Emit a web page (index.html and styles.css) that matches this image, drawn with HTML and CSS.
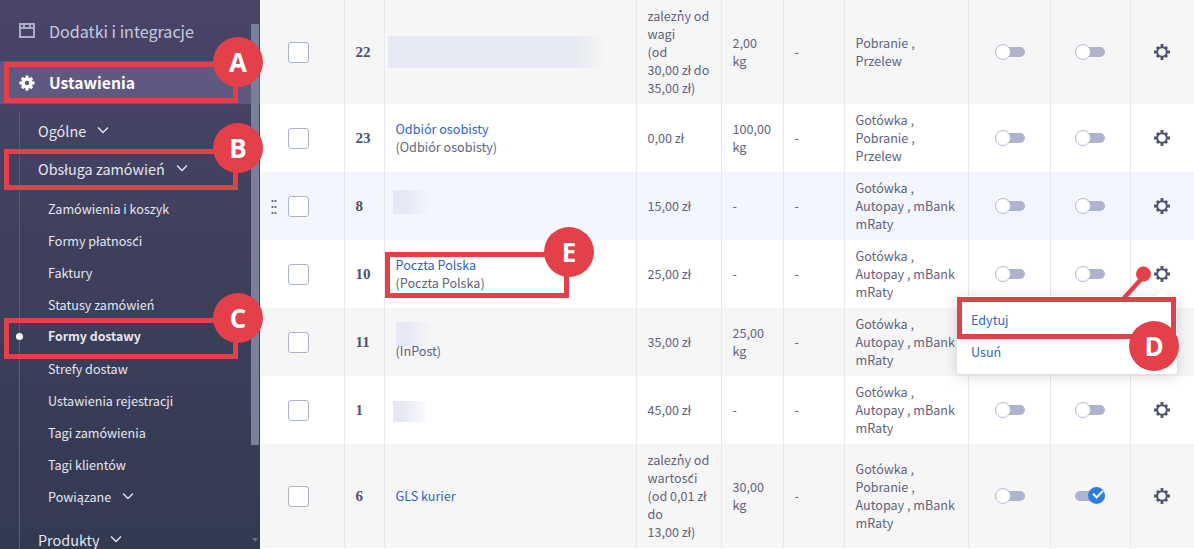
FILE: index.html
```html
<!DOCTYPE html>
<html lang="pl">
<head>
    <meta charset="UTF-8">
    <title>Formy dostawy</title>
    <link rel="stylesheet" href="styles.css">
</head>
<body>
    <svg width="0" height="0" class="defs">
        <symbol id="chev" viewBox="0 0 12 8"><path d="M1 1.5l5 5 5-5" fill="none" stroke="currentColor" stroke-width="1.4"/></symbol>
        <symbol id="gear" viewBox="0 0 18 18">
            <circle cx="9" cy="9" r="4.800" fill="none" stroke="currentColor" stroke-width="2"/>
            <path d="M7.600 1h2.800v3H7.600zM7.600 14h2.800v3H7.600zM1 7.600h3v2.800H1zM14 7.600h3v2.800h-3zM2.900 4.900l2-2 2.200 2.200-2 2zM10.900 5.100l2.200-2.200 2 2-2.200 2.200zM2.900 13.100l2.200-2.200 2 2-2.200 2.200zM10.900 12.900l2-2 2.200 2.200-2 2z" fill="currentColor"/>
        </symbol>
        <symbol id="gear-solid" viewBox="0 0 18 18">
            <circle cx="9" cy="9" r="4.500" fill="none" stroke="currentColor" stroke-width="4"/>
            <path d="M7.300 0.500h3.400v3H7.300zM7.300 14.500h3.400v3H7.300zM0.500 7.300h3v3.400h-3zM14.500 7.300h3v3.400h-3zM2 4.400L4.400 2l2.200 2.200-2.400 2.400zM11.400 4.200L13.600 2 16 4.400l-2.200 2.200zM2 13.600l2.200-2.200 2.400 2.400L4.400 16zM11.400 13.800l2.400-2.400 2.200 2.200-2.400 2.400z" fill="currentColor"/>
        </symbol>
    </svg>

    <aside class="sidebar">
        <div class="nav-top">
            <svg class="nav-icon" width="16" height="15" viewBox="0 0 16 15"><path d="M1 1h14v13H1zM1 5h14M5 1v4M11 1v4" fill="none" stroke="#a9aec6" stroke-width="2"/></svg>
            Dodatki i integracje
        </div>
        <div class="nav-current">
            <svg class="nav-gear" width="16" height="16"><use href="#gear-solid"/></svg>
            Ustawienia
        </div>
        <div class="nav-tree">
            <div class="nav-group">Ogólne <svg class="chev"><use href="#chev"/></svg></div>
            <div class="nav-group">Obsługa zamówień <svg class="chev"><use href="#chev"/></svg></div>
            <ul class="nav-sub">
                <li>Zamówienia i koszyk</li>
                <li>Formy płatności</li>
                <li>Faktury</li>
                <li>Statusy zamówień</li>
                <li class="active">Formy dostawy</li>
                <li>Strefy dostaw</li>
                <li>Ustawienia rejestracji</li>
                <li>Tagi zamówienia</li>
                <li>Tagi klientów</li>
                <li>Powiązane <svg class="chev"><use href="#chev"/></svg></li>
            </ul>
            <div class="nav-group last">Produkty <svg class="chev"><use href="#chev"/></svg></div>
        </div>
        <div class="scroll-thumb"></div>
        <div class="scroll-arrow"></div>
    </aside>

    <main class="content">
        <table class="ship-table">
            <colgroup>
                <col class="c-check"><col class="c-id"><col class="c-name"><col class="c-price"><col class="c-weight"><col class="c-time"><col class="c-pay"><col class="c-on"><col class="c-on2"><col class="c-act">
            </colgroup>
            <tr class="odd">
                <td class="check"><span class="box"></span></td>
                <td class="num">22</td>
                <td><div class="blur blur-wide"></div></td>
                <td>zależny od<br>wagi<br>(od<br>30,00 zł do<br>35,00 zł)</td>
                <td>2,00 kg</td>
                <td>-</td>
                <td>Pobranie , Przelew</td>
                <td class="mid"><span class="toggle"></span></td>
                <td class="mid"><span class="toggle"></span></td>
                <td class="mid"><svg class="gear"><use href="#gear"/></svg></td>
            </tr>
            <tr>
                <td class="check"><span class="box"></span></td>
                <td class="num">23</td>
                <td><a href="#">Odbiór osobisty</a><br>(Odbiór osobisty)</td>
                <td>0,00 zł</td>
                <td>100,00 kg</td>
                <td>-</td>
                <td>Gotówka , Pobranie , Przelew</td>
                <td class="mid"><span class="toggle"></span></td>
                <td class="mid"><span class="toggle"></span></td>
                <td class="mid"><svg class="gear"><use href="#gear"/></svg></td>
            </tr>
            <tr class="hover">
                <td class="check"><span class="box"></span><span class="drag"></span></td>
                <td class="num">8</td>
                <td><div class="blur blur-up"></div></td>
                <td>15,00 zł</td>
                <td>-</td>
                <td>-</td>
                <td>Gotówka , Autopay , mBank mRaty</td>
                <td class="mid"><span class="toggle"></span></td>
                <td class="mid"><span class="toggle"></span></td>
                <td class="mid"><svg class="gear"><use href="#gear"/></svg></td>
            </tr>
            <tr>
                <td class="check"><span class="box"></span></td>
                <td class="num">10</td>
                <td><a href="#">Poczta Polska</a><br>(Poczta Polska)</td>
                <td>25,00 zł</td>
                <td>-</td>
                <td>-</td>
                <td>Gotówka , Autopay , mBank mRaty</td>
                <td class="mid"><span class="toggle"></span></td>
                <td class="mid"><span class="toggle"></span></td>
                <td class="mid"><svg class="gear"><use href="#gear"/></svg></td>
            </tr>
            <tr class="odd">
                <td class="check"><span class="box"></span></td>
                <td class="num">11</td>
                <td><div class="blur blur-inline"></div>(InPost)</td>
                <td>35,00 zł</td>
                <td>25,00 kg</td>
                <td>-</td>
                <td>Gotówka , Autopay , mBank mRaty</td>
                <td class="mid"><span class="toggle"></span></td>
                <td class="mid"><span class="toggle"></span></td>
                <td class="mid"><svg class="gear"><use href="#gear"/></svg></td>
            </tr>
            <tr>
                <td class="check"><span class="box"></span></td>
                <td class="num">1</td>
                <td><div class="blur blur-low"></div></td>
                <td>45,00 zł</td>
                <td>-</td>
                <td>-</td>
                <td>Gotówka , Autopay , mBank mRaty</td>
                <td class="mid"><span class="toggle"></span></td>
                <td class="mid"><span class="toggle"></span></td>
                <td class="mid"><svg class="gear"><use href="#gear"/></svg></td>
            </tr>
            <tr class="odd">
                <td class="check"><span class="box"></span></td>
                <td class="num">6</td>
                <td><a href="#">GLS kurier</a></td>
                <td>zależny od<br>wartości<br>(od 0,01 zł<br>do<br>13,00 zł)</td>
                <td>30,00 kg</td>
                <td>-</td>
                <td>Gotówka , Pobranie , Autopay , mBank mRaty</td>
                <td class="mid"><span class="toggle"></span></td>
                <td class="mid"><span class="toggle on"></span></td>
                <td class="mid"><svg class="gear"><use href="#gear"/></svg></td>
            </tr>
        </table>
    </main>

    <!-- row menu -->
    <div class="menu">
        <a href="#">Edytuj</a>
        <a href="#">Usuń</a>
    </div>

    <!-- help annotations drawn over the screenshot -->
    <div class="mark mark-a"></div><div class="badge badge-a">A</div>
    <div class="mark mark-b"></div><div class="badge badge-b">B</div>
    <div class="mark mark-c"></div><div class="badge badge-c">C</div>
    <div class="mark mark-d"></div><div class="badge badge-d">D</div>
    <div class="mark mark-e"></div><div class="badge badge-e">E</div>
    <svg class="pointer" width="40" height="40" viewBox="0 0 40 40">
        <path d="M4 32L24 10" stroke="#e4404a" stroke-width="4.5"/>
        <circle cx="23.500" cy="8" r="7.500" fill="#e4404a"/>
    </svg>
</body>
</html>
```

FILE: styles.css
```css
html, body {
    margin: 0;
    padding: 0;
    height: 549px;
    overflow: hidden;
}

body {
    display: flex;
    font-family: "Noto Sans CJK SC", "Noto Sans", sans-serif;
    font-size: 12.6px;
    color: #62627f;
    background: #fff;
}

.defs {
    position: absolute;
}

/* Sidebar */
.sidebar {
    position: relative;
    flex: 0 0 260px;
    height: 549px;
    overflow: hidden;
    background: linear-gradient(180deg, #4a4468, #323a50);
    color: #e4e6f0;
}

.nav-top {
    display: flex;
    align-items: center;
    height: 61px;
    padding-left: 19px;
    font-size: 16.100px;
    color: #c6cade;
}

.nav-icon {
    margin-right: 14px;
}

.nav-current {
    display: flex;
    align-items: center;
    height: 43px;
    padding-left: 19px;
    background: #5f5880;
    font-size: 15.700px;
    font-weight: 700;
    color: #fff;
}

.nav-gear {
    margin-right: 14px;
    color: #fff;
}

.nav-tree {
    margin: 8px 0 0 19px;
    border-left: 1px solid #5a5b78;
}

.nav-group {
    display: flex;
    align-items: center;
    height: 36px;
    margin-bottom: 2px;
    padding-left: 18px;
    font-size: 14.400px;
}

.nav-group.last {
    margin-top: 9px;
}

.chev {
    width: 12px;
    height: 8px;
    margin-left: 11px;
    color: #e4e6f0;
}

.nav-sub {
    list-style: none;
    margin: 6px 0 0;
    padding: 0;
}

.nav-sub li {
    position: relative;
    display: flex;
    align-items: center;
    height: 32px;
    padding-left: 28px;
    font-size: 12.600px;
}

.nav-sub li.active {
    font-weight: 700;
    font-size: 12.300px;
}

.nav-sub li.active::before {
    content: "";
    position: absolute;
    left: -4px;
    top: 13px;
    width: 7px;
    height: 7px;
    border-radius: 50%;
    background: #fff;
}

.scroll-thumb {
    position: absolute;
    left: 251px;
    top: 24px;
    width: 8px;
    height: 421px;
    background: #7a7f9c;
}

.scroll-arrow {
    position: absolute;
    left: 252px;
    top: 538px;
    border: 3px solid transparent;
    border-top: 4px solid #6c708c;
}

/* Table */
.content {
    flex: 1;
    min-width: 0;
}

.ship-table {
    width: 934px;
    table-layout: fixed;
    border-collapse: collapse;
    line-height: 18px;
}

.c-check { width: 84px; }
.c-id { width: 40px; }
.c-name { width: 252px; }
.c-price { width: 85px; }
.c-weight { width: 62px; }
.c-time { width: 61px; }
.c-pay { width: 124px; }
.c-on { width: 82px; }
.c-on2 { width: 80px; }
.c-act { width: 64px; }

.ship-table tr {
    height: 68px;
}

.ship-table tr.odd {
    background: #f6f6f6;
}

.ship-table tr.hover {
    background: #f3f6fd;
}

.ship-table td {
    padding: 7px 11px;
    border-left: 1px solid #e9e9ee;
    vertical-align: middle;
}

.ship-table td:first-child {
    border-left: none;
}

.ship-table a {
    color: #2d66c8;
    text-decoration: none;
}

td.check {
    padding: 0 35px 0 0;
}

td.check .box {
    display: block;
    float: right;
    width: 19px;
    height: 19px;
    background: #fff;
    border: 1px solid #aab3d0;
    border-radius: 3px;
}

.drag {
    float: right;
    width: 6px;
    height: 18px;
    margin: 2px 11px 0 0;
    background-image: radial-gradient(circle, #666a8a 1px, transparent 1.2px);
    background-size: 3px 6px;
}

td.num {
    font-family: "Liberation Serif", serif;
    font-size: 15px;
    font-weight: 700;
    color: #4f5272;
}

.ship-table td.mid {
    padding: 0;
    text-align: center;
}

.ship-table td.mid:nth-child(8) {
    padding-left: 1px;
}

.blur {
    width: 37px;
    height: 24px;
    margin-left: -3px;
    background: linear-gradient(90deg, #e6e9f4 30%, rgba(230, 233, 244, 0));
}

.blur-wide {
    width: 218px;
    height: 32px;
    margin-left: -8px;
    background: linear-gradient(90deg, #e6e9f1 85%, rgba(230, 233, 241, 0));
}

.blur-up {
    margin-bottom: 8px;
}

.blur-low {
    height: 21px;
    margin-top: 3px;
}

.blur-inline {
    margin: -2px 0 -4px 0;
}

/* Toggle */
.toggle {
    position: relative;
    display: block;
    width: 30px;
    height: 10px;
    margin: 0 auto;
    border-radius: 5px;
    background: #acb4d0;
}

.toggle::before {
    content: "";
    position: absolute;
    left: 0;
    top: -3px;
    width: 14px;
    height: 14px;
    border: 1px solid #b5bcd8;
    border-radius: 50%;
    background: #fff;
}

.toggle.on::before {
    left: 13px;
    top: -4px;
    width: 17px;
    height: 17px;
    border: none;
    background: #2f7de1;
}

.toggle.on::after {
    content: "";
    position: absolute;
    left: 18px;
    top: -1px;
    width: 8px;
    height: 4px;
    border-left: 2px solid #fff;
    border-bottom: 2px solid #fff;
    transform: rotate(-45deg);
}

.gear {
    display: block;
    width: 18px;
    height: 18px;
    margin: 0 auto;
    color: #50536f;
}

/* Dropdown */
.menu {
    position: absolute;
    left: 957px;
    top: 296px;
    width: 220px;
    height: 78px;
    padding-top: 8px;
    box-sizing: border-box;
    background: #fff;
    border-radius: 3px;
    box-shadow: 0 2px 14px rgba(40, 40, 70, 0.18);
}

.menu::before {
    content: "";
    position: absolute;
    left: 199px;
    top: -6px;
    border: 6px solid transparent;
    border-top: none;
    border-bottom-color: #fff;
}

.menu a {
    display: block;
    height: 32px;
    padding-left: 14px;
    line-height: 32px;
    color: #2d66c8;
    text-decoration: none;
}

/* Annotations */
.mark {
    position: absolute;
    box-sizing: border-box;
    border: 5px solid #e4404a;
}

.mark-a { left: 4px; top: 62px; width: 234px; height: 41px; }
.mark-b { left: 4px; top: 149px; width: 234px; height: 41px; }
.mark-c { left: 4px; top: 318px; width: 234px; height: 41px; }
.mark-d { left: 957px; top: 297px; width: 219px; height: 42px; }
.mark-e { left: 385px; top: 252px; width: 184px; height: 46px; }

.badge {
    position: absolute;
    width: 50px;
    height: 50px;
    border-radius: 50%;
    background: #e4404a;
    color: #fff;
    font-family: "Open Sans", sans-serif;
    font-size: 26px;
    font-weight: 700;
    line-height: 50px;
    text-align: center;
}

.badge-a { left: 213px; top: 37px; }
.badge-b { left: 213px; top: 123px; }
.badge-c { left: 213px; top: 293px; }
.badge-d { left: 1129px; top: 321px; }
.badge-e { left: 544px; top: 227px; }

.pointer {
    position: absolute;
    left: 1120px;
    top: 266px;
}
```
